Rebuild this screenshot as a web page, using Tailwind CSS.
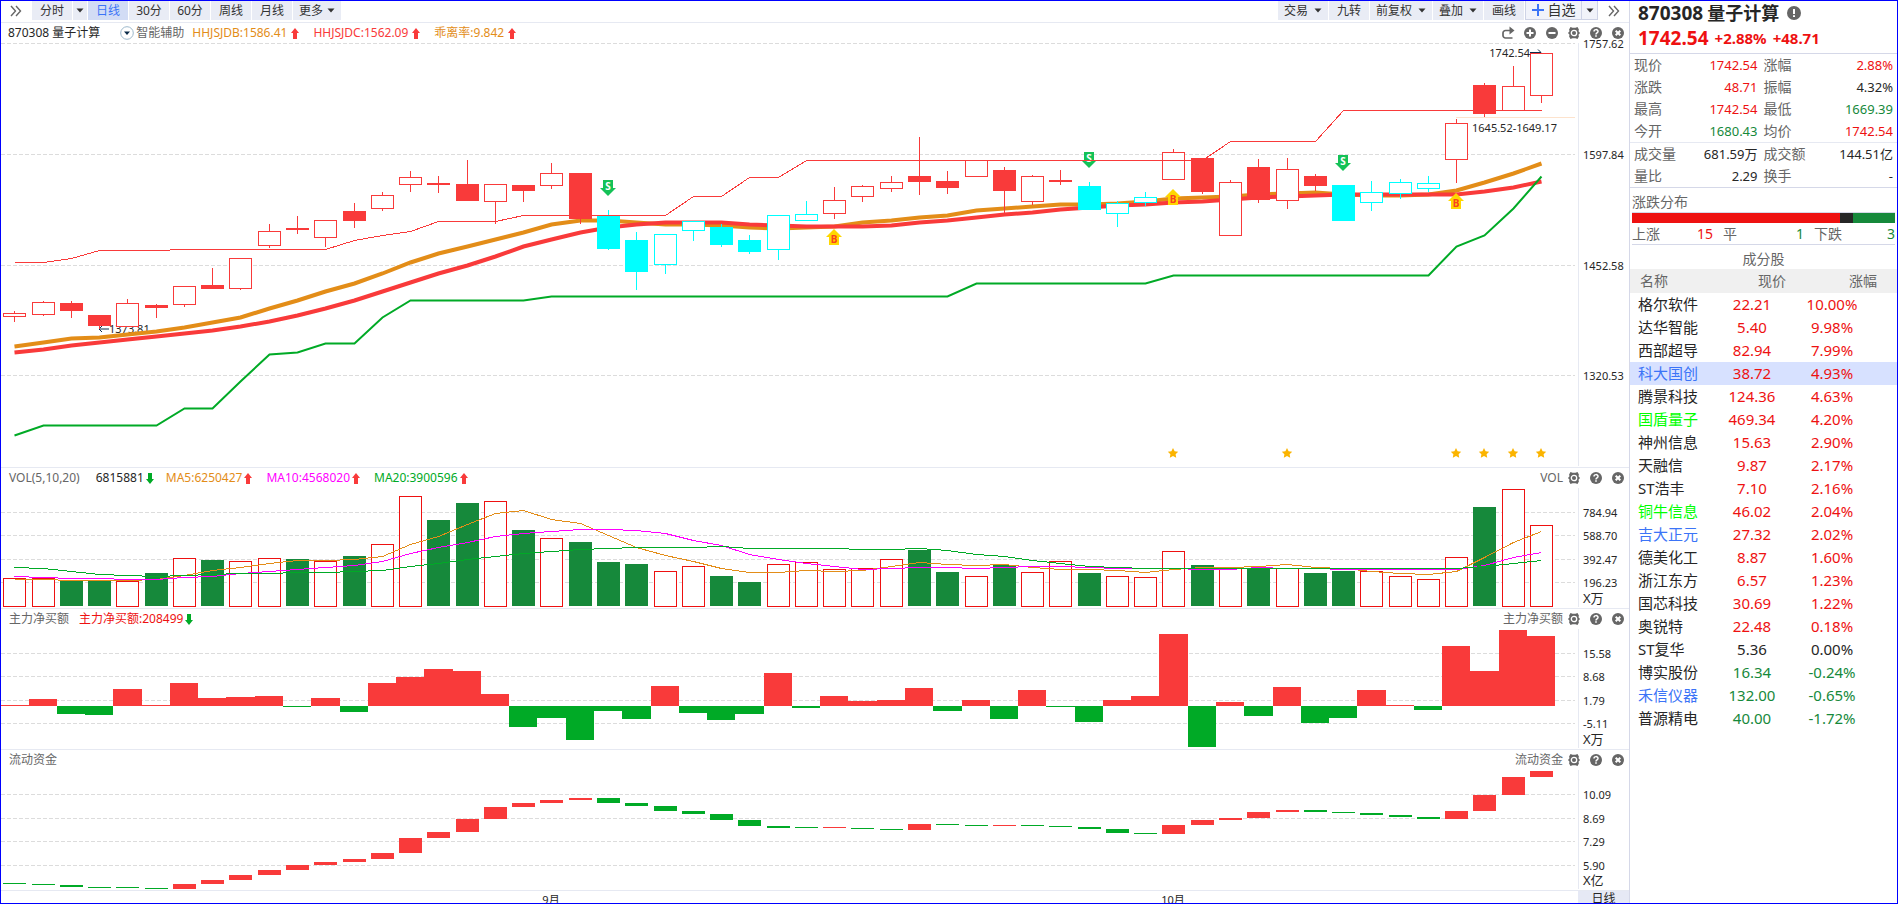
<!DOCTYPE html>
<html lang="zh-CN">
<head>
    <meta charset="UTF-8">
    <meta name="viewport" content="width=device-width, initial-scale=1.0">
    <title>870308 量子计算</title>
    <script src="https://cdn.jsdelivr.net/npm/@tailwindcss/browser@4"></script>
</head>
<body class="h-screen overflow-hidden bg-white font-['Noto_Sans','Noto_Sans_CJK_SC',sans-serif] text-xs text-[#262626]">

    <!-- Icon symbols -->
    <svg class="hidden">
        <symbol id="i-more" viewBox="0 0 12 12"><path d="M1 1l4.5 5L1 11M6 1l4.5 5L6 11" fill="none" stroke="#666" stroke-width="1.4"/></symbol>
        <symbol id="i-caret" viewBox="0 0 8 5"><path d="M0.5 0.5h7L4 4.5z" fill="#333"/></symbol>
        <symbol id="i-up" viewBox="0 0 8 11"><path d="M4 0l4 5H6v6H2V5H0z" fill="#f93a3a"/></symbol>
        <symbol id="i-down" viewBox="0 0 8 11"><path d="M4 11l4-5H6V0H2v6H0z" fill="#00aa26"/></symbol>
        <symbol id="i-redo" viewBox="0 0 14 14"><path d="M9.5 4.500H4.500a2.500 2.500 0 0 0-2.500 2.500v2.500a2.500 2.500 0 0 0 2.500 2.500h7" fill="none" stroke="#666" stroke-width="1.700"/><path d="M8.500 0.500l5 4-5 4z" fill="#666"/></symbol>
        <symbol id="i-plus" viewBox="0 0 14 14"><circle cx="7" cy="7" r="6" fill="#666"/><path d="M7 3.500v7M3.500 7h7" stroke="#fff" stroke-width="2"/></symbol>
        <symbol id="i-minus" viewBox="0 0 14 14"><circle cx="7" cy="7" r="6" fill="#666"/><path d="M3.500 7h7" stroke="#fff" stroke-width="2"/></symbol>
        <symbol id="i-close" viewBox="0 0 14 14"><circle cx="7" cy="7" r="6" fill="#666"/><path d="M4.700 4.700l4.600 4.600M9.300 4.700l-4.600 4.600" stroke="#fff" stroke-width="2"/></symbol>
        <symbol id="i-help" viewBox="0 0 14 14"><circle cx="7" cy="7" r="6" fill="#666"/><path d="M5 5.600c0-2.600 4-2.600 4-.2 0 1.500-2 1.500-2 3" fill="none" stroke="#fff" stroke-width="1.500"/><path d="M6.200 9.300h1.600v1.500h-1.600z" fill="#fff"/></symbol>
        <symbol id="i-gear" viewBox="0 0 14 14"><path d="M3.500 1l2 .8h3l2-.8 1.400 2.600-.4 1.600L13 7l-1.500 1.800.4 1.600L10.500 13l-2-.8h-3l-2 .8-1.400-2.600.4-1.600L1 7l1.500-1.800-.4-1.600z" fill="#666"/><circle cx="7" cy="7" r="2.700" fill="#666" stroke="#fff" stroke-width="1.300"/></symbol>
        <symbol id="i-info" viewBox="0 0 14 14"><circle cx="7" cy="7" r="7" fill="#666"/><path d="M7 3v5M7 9.300v1.800" stroke="#fff" stroke-width="2"/></symbol>
    </svg>

    <div class="flex h-full border border-[#0000ff]">
        <!-- Charts -->
        <main class="flex min-w-0 flex-1 flex-col">
            <!-- Period toolbar -->
            <nav class="flex h-[22px] shrink-0 items-start justify-between border-b border-[#e6e9f2] text-[#333]">
                <div class="flex gap-px">
                    <button class="flex h-[19px] w-[30px] items-center justify-center" aria-label="展开"><svg class="h-3 w-3"><use href="#i-more"/></svg></button>
                    <button class="h-[19px] w-10 bg-[#e9ecf5]">分时</button>
                    <button class="flex h-[19px] w-3.5 items-center justify-center bg-[#e9ecf5]" aria-label="分时选项"><svg class="h-[5px] w-2"><use href="#i-caret"/></svg></button>
                    <button class="h-[19px] w-10 bg-[#d2dcf5] text-[#3b74f7]">日线</button>
                    <button class="h-[19px] w-10 bg-[#e9ecf5]">30分</button>
                    <button class="h-[19px] w-10 bg-[#e9ecf5]">60分</button>
                    <button class="h-[19px] w-10 bg-[#e9ecf5]">周线</button>
                    <button class="h-[19px] w-10 bg-[#e9ecf5]">月线</button>
                    <button class="flex h-[19px] w-12 items-center justify-center gap-1 bg-[#e9ecf5]">更多<svg class="h-[5px] w-2"><use href="#i-caret"/></svg></button>
                </div>
                <div class="flex gap-px">
                    <button class="flex h-[19px] w-[50px] items-center justify-center gap-1.5 bg-[#e9ecf5]">交易<svg class="h-[5px] w-2"><use href="#i-caret"/></svg></button>
                    <button class="h-[19px] w-10 bg-[#e9ecf5]">九转</button>
                    <button class="flex h-[19px] w-[62px] items-center justify-center gap-1.5 bg-[#e9ecf5]">前复权<svg class="h-[5px] w-2"><use href="#i-caret"/></svg></button>
                    <button class="flex h-[19px] w-[50px] items-center justify-center gap-1.5 bg-[#e9ecf5]">叠加<svg class="h-[5px] w-2"><use href="#i-caret"/></svg></button>
                    <button class="h-[19px] w-10 bg-[#e9ecf5]">画线</button>
                    <div class="flex h-[19px] border border-t-0 border-[#ced3e6] bg-[#f1f3fa]">
                        <button class="flex w-[55px] items-center justify-center gap-1 text-sm"><svg class="h-3 w-3" viewBox="0 0 12 12"><path d="M6 0v12M0 6h12" stroke="#3b74f7" stroke-width="2"/></svg>自选</button>
                        <button class="flex w-4 items-center justify-center border-l border-[#ced3e6]" aria-label="自选选项"><svg class="h-[5px] w-2"><use href="#i-caret"/></svg></button>
                    </div>
                    <button class="flex h-[19px] w-[30px] items-center justify-center" aria-label="收起"><svg class="h-3 w-3"><use href="#i-more"/></svg></button>
                </div>
            </nav>

            <!-- K line -->
            <section class="flex min-h-0 flex-1 flex-col border-b border-[#e6e9f2]">
                <header class="flex h-5 shrink-0 items-center justify-between pl-[7px] pr-1 leading-5">
                    <div class="flex items-center whitespace-nowrap">
                        <span class="mr-5">870308 量子计算</span>
                        <button class="mr-2 flex items-center gap-0.5 text-[#666]">
                            <svg class="h-3.5 w-3.5" viewBox="0 0 14 14"><circle cx="7" cy="7" r="6.300" fill="#fff" stroke="#9db9cc"/><path d="M4 5.500h6L7 9z" fill="#0b2c4a"/></svg>智能辅助
                        </button>
                        <span class="mr-3.5 flex items-center gap-1 text-[#e38d18]">HHJSJDB:1586.41<svg class="h-[11px] w-2"><use href="#i-up"/></svg></span>
                        <span class="mr-3.5 flex items-center gap-1 text-[#f93a3a]">HHJSJDC:1562.09<svg class="h-[11px] w-2"><use href="#i-up"/></svg></span>
                        <span class="flex items-center gap-1 text-[#e38d18]">乖离率:9.842<svg class="h-[11px] w-2"><use href="#i-up"/></svg></span>
                    </div>
                    <div class="flex gap-2">
                        <button aria-label="刷新"><svg class="h-3.5 w-3.5"><use href="#i-redo"/></svg></button>
                        <button aria-label="放大"><svg class="h-3.5 w-3.5"><use href="#i-plus"/></svg></button>
                        <button aria-label="缩小"><svg class="h-3.5 w-3.5"><use href="#i-minus"/></svg></button>
                        <button aria-label="设置"><svg class="h-3.5 w-3.5"><use href="#i-gear"/></svg></button>
                        <button aria-label="帮助"><svg class="h-3.5 w-3.5"><use href="#i-help"/></svg></button>
                        <button aria-label="关闭"><svg class="h-3.5 w-3.5"><use href="#i-close"/></svg></button>
                    </div>
                </header>
                <svg id="kline" class="min-h-0 w-full flex-1 overflow-visible"></svg>
            </section>

            <!-- Volume -->
            <section class="flex h-[141px] shrink-0 flex-col border-b border-[#e6e9f2]">
                <header class="flex h-5 shrink-0 items-center justify-between pl-2 pr-1 leading-5">
                    <div class="flex items-center whitespace-nowrap">
                        <span class="mr-4 text-[#666]">VOL(5,10,20)</span>
                        <span class="mr-3 flex items-center gap-0.5">6815881<svg class="h-[11px] w-2"><use href="#i-down"/></svg></span>
                        <span class="mr-3.5 flex items-center gap-0.5 text-[#e38d18]">MA5:6250427<svg class="h-[11px] w-2"><use href="#i-up"/></svg></span>
                        <span class="mr-3.5 flex items-center gap-0.5 text-[#ff00ff]">MA10:4568020<svg class="h-[11px] w-2"><use href="#i-up"/></svg></span>
                        <span class="flex items-center gap-0.5 text-[#00aa26]">MA20:3900596<svg class="h-[11px] w-2"><use href="#i-up"/></svg></span>
                    </div>
                    <div class="flex items-center gap-2 text-[#666]">
                        <span class="-mr-1">VOL</span>
                        <button aria-label="设置"><svg class="h-3.5 w-3.5"><use href="#i-gear"/></svg></button>
                        <button aria-label="帮助"><svg class="h-3.5 w-3.5"><use href="#i-help"/></svg></button>
                        <button aria-label="关闭"><svg class="h-3.5 w-3.5"><use href="#i-close"/></svg></button>
                    </div>
                </header>
                <svg id="volume" class="min-h-0 w-full flex-1"></svg>
            </section>

            <!-- Net buying -->
            <section class="flex h-[141px] shrink-0 flex-col border-b border-[#e6e9f2]">
                <header class="flex h-5 shrink-0 items-center justify-between pl-2 pr-1 leading-5">
                    <div class="flex items-center whitespace-nowrap">
                        <span class="mr-2.5 text-[#666]">主力净买额</span>
                        <span class="flex items-center gap-0.5 text-[#ee1111]">主力净买额:208499<svg class="h-[11px] w-2"><use href="#i-down"/></svg></span>
                    </div>
                    <div class="flex items-center gap-2 text-[#666]">
                        <span class="-mr-1">主力净买额</span>
                        <button aria-label="设置"><svg class="h-3.5 w-3.5"><use href="#i-gear"/></svg></button>
                        <button aria-label="帮助"><svg class="h-3.5 w-3.5"><use href="#i-help"/></svg></button>
                        <button aria-label="关闭"><svg class="h-3.5 w-3.5"><use href="#i-close"/></svg></button>
                    </div>
                </header>
                <svg id="netbuy" class="min-h-0 w-full flex-1"></svg>
            </section>

            <!-- Floating funds -->
            <section class="flex h-[141px] shrink-0 flex-col border-b border-[#e6e9f2]">
                <header class="flex h-5 shrink-0 items-center justify-between pl-2 pr-1 leading-5 text-[#666]">
                    <span>流动资金</span>
                    <div class="flex items-center gap-2">
                        <span class="-mr-1">流动资金</span>
                        <button aria-label="设置"><svg class="h-3.5 w-3.5"><use href="#i-gear"/></svg></button>
                        <button aria-label="帮助"><svg class="h-3.5 w-3.5"><use href="#i-help"/></svg></button>
                        <button aria-label="关闭"><svg class="h-3.5 w-3.5"><use href="#i-close"/></svg></button>
                    </div>
                </header>
                <svg id="funds" class="min-h-0 w-full flex-1"></svg>
            </section>

            <!-- Date axis -->
            <footer class="flex h-3 shrink-0 overflow-hidden">
                <svg id="dates" class="h-3 min-w-0 flex-1"></svg>
                <div class="w-[51px] bg-[#e6e9f5] text-center text-xs leading-4">日线</div>
            </footer>
        </main>

        <!-- Quote sidebar -->
        <aside class="flex w-[268px] shrink-0 flex-col border-l border-[#d5d8e8] text-sm text-[#262626]">
            <div class="flex h-[53px] flex-col border-b border-[#d5d8e8] pl-2 font-bold">
                <div class="flex h-6 items-center gap-1 text-[19px] leading-6"><span>870308</span><span class="text-lg leading-6">量子计算</span><svg class="ml-1 h-3.5 w-3.5"><use href="#i-info"/></svg></div>
                <div class="flex h-7 items-center gap-1.5 text-[#ee1111]"><span class="text-[19px]">1742.54</span><span class="text-[15px]">+2.88%</span><span class="text-[15px]">+48.71</span></div>
            </div>

            <dl class="grid grid-cols-[auto_1fr_auto_1fr] border-b border-[#e6e9f2] px-1 leading-[22px] text-[#666] [&>dd]:text-right [&>dd]:text-[13px] [&>dd:nth-of-type(odd)]:pr-1.5">
                <dt>现价</dt><dd class="text-[#ee1111]">1742.54</dd><dt>涨幅</dt><dd class="text-[#ee1111]">2.88%</dd>
                <dt>涨跌</dt><dd class="text-[#ee1111]">48.71</dd><dt>振幅</dt><dd class="text-[#262626]">4.32%</dd>
                <dt>最高</dt><dd class="text-[#ee1111]">1742.54</dd><dt>最低</dt><dd class="text-[#16893b]">1669.39</dd>
                <dt>今开</dt><dd class="text-[#16893b]">1680.43</dd><dt>均价</dt><dd class="text-[#ee1111]">1742.54</dd>
            </dl>
            <dl class="grid grid-cols-[auto_1fr_auto_1fr] border-b border-[#d5d8e8] px-1 leading-[22px] text-[#666] [&>dd]:text-right [&>dd]:text-[13px] [&>dd:nth-of-type(odd)]:pr-1.5">
                <dt>成交量</dt><dd class="text-[#262626]">681.59万</dd><dt>成交额</dt><dd class="text-[#262626]">144.51亿</dd>
                <dt>量比</dt><dd class="text-[#262626]">2.29</dd><dt>换手</dt><dd class="text-[#262626]">-</dd>
            </dl>

            <!-- Up / flat / down -->
            <div class="mx-0.5 border-b border-[#d5d8e8] pt-1 text-[#666]">
                <h2 class="leading-5">涨跌分布</h2>
                <div class="flex h-[11px] border-t border-[#d5d8e8]">
                    <div class="flex-[15] bg-[#ee1111]"></div>
                    <div class="flex-[1] bg-[#262626]"></div>
                    <div class="flex-[3] bg-[#16893b]"></div>
                </div>
                <div class="grid grid-cols-3 gap-2.5 leading-[21px]">
                    <div class="flex justify-between">上涨<span class="text-[#ee1111]">15</span></div>
                    <div class="flex justify-between">平<span class="text-[#16893b]">1</span></div>
                    <div class="flex justify-between">下跌<span class="text-[#16893b]">3</span></div>
                </div>
            </div>

            <h2 class="pt-[3px] text-center leading-[21px] text-[#666]">成分股</h2>
            <table class="w-full table-fixed text-[15px] leading-[23px]">
                <colgroup><col class="w-[84px]"><col class="w-[76px]"><col class="w-[84px]"><col></colgroup>
                <thead class="bg-[#f0f0f0] text-sm leading-6 text-[#666]">
                    <tr><th class="pl-2.5 text-left font-normal">名称</th><th class="pr-1 text-right font-normal">现价</th><th colspan="2" class="pr-5 text-right font-normal">涨幅</th></tr>
                </thead>
                <tbody id="stocks"></tbody>
            </table>
        </aside>
    </div>

    <script>
        const RED = '#f93a3a', GREEN = '#00aa26', CYAN = '#00ffff', ORANGE = '#e38d18', PINK = '#ff00ff';
        const COUNT = 55, AXIS = 51;

        // high, top, bottom, low, kind: h = hollow red, f = solid red, c = solid cyan, d = hollow cyan
        const candles = [
            [268,270,274,279,'h'],[258,259,272,273,'h'],[258,260,268,275,'f'],[272,272,283,286,'f'],[256,260,284,284,'h'],
            [261,262,265,275,'f'],[243,243,262,264,'h'],[225,242,246,246,'f'],[215,215,246,247,'h'],[181,188,203,205,'h'],
            [173,185,187,191,'f'],[177,177,195,204,'h'],[160,168,178,185,'f'],[149,152,166,168,'h'],[128,134,142,149,'h'],
            [133,140,142,150,'f'],[117,141,158,158,'f'],[141,141,159,181,'h'],[142,142,148,159,'f'],[120,130,143,146,'h'],
            [130,130,176,181,'f'],[167,173,206,207,'c'],[189,197,229,247,'c'],[191,191,222,231,'d'],[178,178,188,198,'d'],
            [181,184,202,204,'c'],[192,197,209,211,'c'],[172,172,207,217,'d'],[158,171,178,178,'d'],[144,157,171,176,'h'],
            [142,143,154,159,'h'],[133,139,146,149,'h'],[94,133,139,152,'f'],[128,138,145,151,'f'],[117,117,134,134,'h'],
            [124,127,148,170,'f'],[132,133,159,162,'h'],[127,137,139,142,'f'],[139,143,167,167,'c'],[158,160,171,184,'d'],
            [149,154,160,163,'d'],[106,109,137,137,'h'],[115,115,149,151,'f'],[137,139,193,193,'h'],[116,124,157,160,'f'],
            [115,126,158,166,'h'],[131,133,143,148,'f'],[142,142,178,178,'c'],[138,149,160,168,'d'],[136,139,151,156,'d'],
            [133,140,146,149,'d'],[76,80,117,140,'h'],[40,42,71,74,'f'],[23,43,68,68,'h'],[10,10,53,60,'h']
        ];
        const upper = [219,219,215,207,207,207,206,206,206,206,206,206,197,192,188,178,178,178,172,172,172,172,172,172,153,153,134,134,117,117,117,117,117,117,117,117,117,117,117,117,117,117,117,98,98,98,98,67,67,67,67,67,67,67,67];
        const lower = [392,382,382,382,382,382,365,365,338,311,309,300,300,274,257,257,257,257,257,253,253,253,253,253,253,253,253,253,253,253,253,253,253,253,240,240,240,240,240,240,240,232,232,232,232,232,232,232,232,232,232,203,192,165,133];
        const fast = [303,299,295,294,291,288,284,279,274,265,257,248,240,230,219,210,203,196,189,181,177,177,179,181,181,182,184,185,184,183,179,177,174,172,167,165,163,161,161,160,158,155,154,153,151,150,149,151,152,152,151,147,139,130,120];
        const slow = [309,306,302,299,296,293,290,287,283,278,272,265,257,248,239,230,222,213,203,196,189,184,181,179,179,179,181,182,183,183,183,182,179,177,174,171,169,166,164,162,161,159,158,156,154,153,152,151,151,151,151,151,148,144,138];

        // Volume bar tops; solid lists the filled ones
        const vol = [90,90,92,92,93,85,70,72,73,70,71,73,68,56,8,32,15,13,42,50,54,74,76,83,78,88,94,76,74,81,80,71,62,84,88,77,84,73,85,88,89,63,77,80,80,80,85,83,83,88,91,69,19,1,37];
        const solid = [2,3,5,7,10,12,15,16,18,20,21,22,25,26,32,33,35,38,42,44,46,47,52];
        const ma5 = [91,91,92,92,92,91,87,82,79,75,72,72,71,68,56,48,36,25,22,31,35,47,59,67,73,80,84,84,82,83,82,78,74,76,77,76,79,81,81,82,84,81,79,79,78,76,79,80,83,85,86,83,69,54,43];
        const ma10 = [88,89,90,90,91,91,89,88,85,83,81,79,77,73,65,59,54,48,45,43,41,41,42,45,52,57,66,71,75,78,81,80,79,79,80,79,78,78,79,80,80,80,81,81,79,80,80,81,81,81,81,81,77,69,64];
        const ma20 = [79,80,83,86,87,88,87,86,85,85,84,84,83,82,78,75,71,68,65,63,61,60,59,59,59,58,60,60,60,60,61,61,60,62,66,68,72,75,78,79,80,80,80,80,80,80,80,80,80,80,80,80,78,75,72];

        const net = [1,7,-8,-9,17,1,23,8,9,10,-1,8,-6,23,29,37,35,12,-21,-12,-34,-5,-13,20,-7,-14,-8,33,-2,10,5,6,18,-5,6,-13,16,-1,-16,6,10,72,-41,4,-10,19,-17,-12,16,1,-4,60,35,76,70];

        // top, bottom, rising
        const flow = [
            [113,114,0],[114,115,0],[115,117,0],[117,118,0],[117,118,0],[118,119,0],[114,119,1],[110,114,1],[105,110,1],[100,105,1],[95,100,1],
            [92,95,1],[89,92,1],[83,89,1],[68,83,1],[62,68,1],[49,62,1],[37,49,1],[33,37,1],[30,33,1],[28,30,1],[28,33,0],
            [33,36,0],[36,41,0],[41,44,0],[44,50,0],[50,56,0],[56,58,0],[57,58,0],[57,58,1],[58,59,0],[59,60,0],[54,60,1],
            [54,55,0],[55,56,0],[55,56,1],[55,56,0],[56,57,0],[57,59,0],[59,63,0],[63,64,0],[55,64,1],[50,55,1],[48,50,1],
            [42,48,1],[40,42,1],[40,42,0],[42,43,0],[43,45,0],[45,47,0],[47,49,0],[41,49,1],[25,41,1],[7,25,1],[1,7,1]
        ];

        const stocks = [
            ['格尔软件','22.21','10.00%'],['达华智能','5.40','9.98%'],['西部超导','82.94','7.99%'],['科大国创','38.72','4.93%','text-[#3b74f7]'],
            ['腾景科技','124.36','4.63%'],['国盾量子','469.34','4.20%','text-[#00ff00]'],['神州信息','15.63','2.90%'],['天融信','9.87','2.17%'],
            ['ST浩丰','7.10','2.16%'],['铜牛信息','46.02','2.04%','text-[#00ff00]'],['吉大正元','27.32','2.02%','text-[#3b74f7]'],['德美化工','8.87','1.60%'],
            ['浙江东方','6.57','1.23%'],['国芯科技','30.69','1.22%'],['奥锐特','22.48','0.18%'],['ST复华','5.36','0.00%'],
            ['博实股份','16.34','-0.24%'],['禾信仪器','132.00','-0.65%','text-[#3b74f7]'],['普源精电','40.00','-1.72%']
        ];

        document.getElementById('stocks').innerHTML = stocks.map(([name, price, pct, cls]) => {
            const n = parseFloat(pct);
            const color = n > 0 ? 'text-[#ee1111]' : n < 0 ? 'text-[#16893b]' : '';
            return `<tr class="${name === '科大国创' ? 'bg-[#d7e1ff]' : ''}"><td class="pl-2 ${cls || ''}">${name}</td><td class="text-center ${color}">${price}</td><td class="text-center ${color}">${pct}</td><td></td></tr>`;
        }).join('');

        const rect = (x, y, w, h, c) => h > 0 ? `<rect x="${x}" y="${y}" width="${w}" height="${h}" fill="${c}"/>` : '';
        const box = (x, y, w, h, c, fill) => `<rect x="${x + .5}" y="${y + .5}" width="${w - 1}" height="${Math.max(h - 1, 1)}" fill="${fill}" stroke="${c}"/>`;
        const line = (x1, y1, x2, y2, c, extra = '') => `<line x1="${x1}" y1="${y1}" x2="${x2}" y2="${y2}" stroke="${c}" ${extra}/>`;
        const text = (x, y, s, extra = '') => `<text x="${x}" y="${y}" font-size="11" fill="#262626" ${extra}>${s}</text>`;

        function center(i, w) {
            return Math.round(13.3 + i * (w - AXIS - 50.3) / (COUNT - 1));
        }

        function path(data, w, k, color, width, extra = '') {
            const pts = data.map((v, i) => `${center(i, w) + .5},${Math.round(v * k) + .5}`).join(' ');
            return `<polyline points="${pts}" fill="none" stroke="${color}" stroke-width="${width}" ${extra}/>`;
        }

        function grid(w, h, k, rows, unit) {
            const right = w - AXIS;
            let out = line(right + .5, 0, right + .5, h - 1, '#e6e9f2');
            rows.forEach(([y, label]) => {
                y = Math.round(y * k) + .5;
                out += line(0, y, right - 3, y, '#dcdcdc', 'stroke-dasharray="4 2"') + text(right + 5, y + 4, label);
            });
            return out + (unit ? text(right + 5, 115 * k, unit, 'style="font-size:13px"') : '');
        }

        function badge(x, y, letter) {
            return letter === 'S'
                ? `<path d="M${x - 5} ${y}h10v8h3l-8 8-8-8h3z" fill="#14c257"/>` + text(x, y + 10, 'S', 'text-anchor="middle" font-weight="bold" style="fill:#fff;font-size:10px"')
                : `<path d="M${x - 5} ${y + 16}h10v-8h3l-8-8-8 8h3z" fill="#ffd700"/>` + text(x, y + 14, 'B', 'text-anchor="middle" font-weight="bold" style="fill:#f9421e;font-size:10px"');
        }

        function drawKline(w, h, k) {
            const X = i => center(i, w);
            let out = grid(w, h, k, [[0, '1757.62'], [111, '1597.84'], [222, '1452.58'], [332, '1320.53']]);
            out += `<path d="M${X(3)} ${286 * k}h10M${X(3) + 3} ${286 * k - 3}l-3 3 3 3" fill="none" stroke="#0b2c4a"/>` + text(X(3) + 10, 290 * k, '1373.81');
            out += path(fast, w, k, ORANGE, 4) + path(slow, w, k, RED, 4) + path(lower, w, k, GREEN, 2);
            [[21, 137, 'S'], [38, 109, 'S'], [47, 112, 'S'], [29, 186, 'B'], [41, 146, 'B'], [51, 150, 'B']]
                .forEach(([i, y, s]) => out += badge(X(i), y * k, s));
            out += line(X(51), 74.5 * k, w - AXIS - 3, 74.5 * k, '#fde3cd');
            candles.forEach(([hi, top, bottom, lo, kind], i) => {
                const c = kind === 'h' || kind === 'f' ? RED : CYAN;
                const x = X(i);
                out += rect(x, hi * k, 1, (lo - hi) * k, c);
                out += kind === 'f' || kind === 'c'
                    ? rect(x - 11, top * k, 23, (bottom - top) * k, c)
                    : box(x - 11, Math.round(top * k), 23, Math.round((bottom - top) * k), c, '#fff');
            });
            out += path(upper, w, k, RED, 1, 'shape-rendering="crispEdges"');
            out += text(X(54) - 11, 14 * k, '1742.54', 'text-anchor="end"') + `<path d="M${X(54) - 11} ${9.5 * k}h11M${X(54) - 3} ${9.5 * k - 3}l3 3" fill="none" stroke="#0b2c4a"/>`;
            out += text(X(51) + 16, 89 * k, '1645.52-1649.17');
            [41, 45, 51, 52, 53, 54].forEach(i => {
                out += `<path transform="translate(${X(i)} ${410 * k})" d="M0-5l1.600 3.200 3.600.5-2.600 2.500.6 3.600L0 3.100l-3.200 1.700.6-3.600-2.600-2.500 3.600-.5z" fill="#fbb400"/>`;
            });
            return out;
        }

        function drawVolume(w, h, k) {
            let out = grid(w, h, k, [[24, '784.94'], [47, '588.70'], [71, '392.47'], [94, '196.23']], 'X万');
            vol.forEach((top, i) => {
                const x = center(i, w) - 11;
                out += solid.includes(i) ? rect(x, top, 23, 118 - top, '#16893b') : box(x, top, 23, 119 - top, '#ee1111', '#fff');
            });
            return out + path(ma5, w, k, ORANGE, 1, 'shape-rendering="crispEdges"')
                + path(ma10, w, k, PINK, 1, 'shape-rendering="crispEdges"')
                + path(ma20, w, k, GREEN, 1, 'shape-rendering="crispEdges"');
        }

        function drawNet(w, h, k) {
            let out = grid(w, h, k, [[24, '15.58'], [47, '8.68'], [71, '1.79'], [94, '-5.11']], 'X万');
            net.forEach((v, i) => {
                const left = i ? center(i, w) - 14 : 0;
                const right = i < COUNT - 1 ? center(i + 1, w) - 14 : center(i, w) + 14;
                out += rect(left, v > 0 ? 77 - v : 77, right - left, Math.abs(v), v > 0 ? RED : GREEN);
            });
            return out;
        }

        function drawFunds(w, h, k) {
            let out = grid(w, h, k, [[24, '10.09'], [48, '8.69'], [71, '7.29'], [95, '5.90']], 'X亿');
            flow.forEach(([top, bottom, up], i) => out += rect(center(i, w) - 11, top, 23, bottom - top, up ? RED : GREEN));
            return out;
        }

        function drawDates(w) {
            return text(center(19, w + AXIS), 13, '9月', 'text-anchor="middle"')
                + text(center(41, w + AXIS), 13, '10月', 'text-anchor="middle"');
        }

        const charts = {
            kline: [424, drawKline],
            volume: [120, drawVolume],
            netbuy: [120, drawNet],
            funds: [120, drawFunds],
            dates: [12, drawDates]
        };

        function draw(svg) {
            const [base, render] = charts[svg.id];
            const { width, height } = svg.getBoundingClientRect();
            svg.innerHTML = render(Math.round(width), height, height / base);
        }

        // Redraw whenever a chart gets its size or changes it
        const observer = new ResizeObserver(entries => entries.forEach(e => draw(e.target)));
        Object.keys(charts).forEach(id => observer.observe(document.getElementById(id)));
    </script>
</body>
</html>
